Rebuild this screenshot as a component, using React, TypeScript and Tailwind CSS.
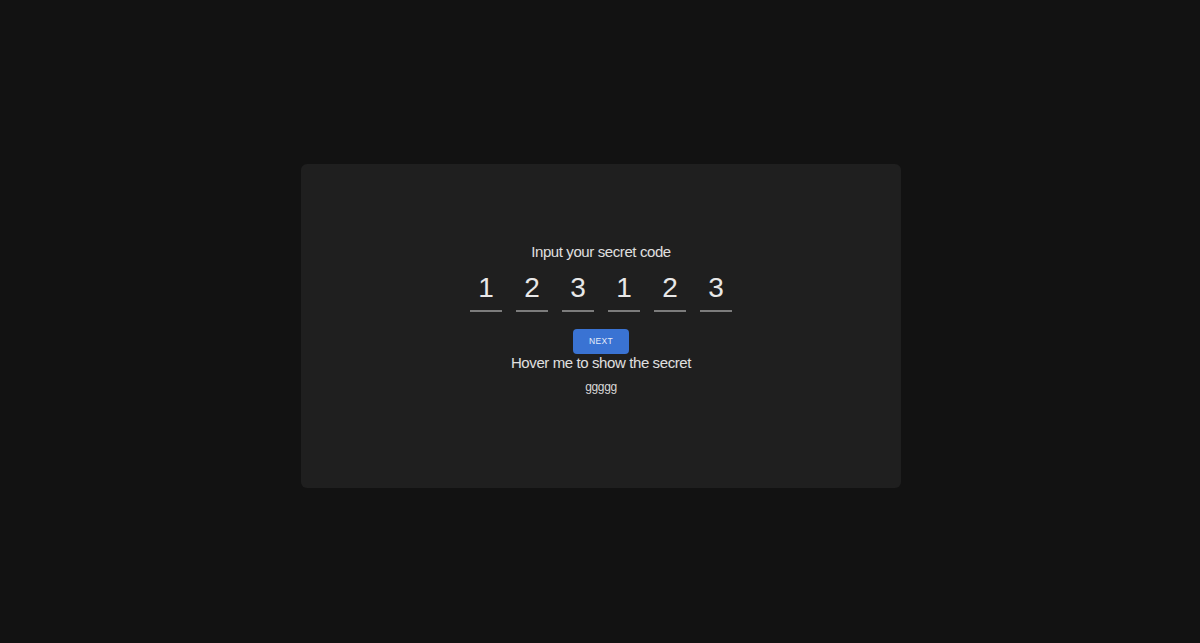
import { useState } from 'react';

const digits = ['1', '2', '3', '1', '2', '3'];

export default function App() {
  const [code, setCode] = useState(digits);

  return (
    <div className="min-h-screen w-full bg-[#121212] flex items-center justify-center pt-[9px] pl-[2px] font-['Liberation_Sans',Arial,sans-serif]">
      <div className="w-[600px] h-[324px] rounded-md bg-[#1f1f1f] flex flex-col items-center justify-center pb-[15px]">
        <div className="text-[15px] leading-[18px] tracking-[-0.4px] text-[#e0e0e0]">Input your secret code</div>
        <div className="flex gap-[14px] mt-[11px]">
          {code.map((d, i) => (
            <input
              key={i}
              value={d}
              maxLength={1}
              onChange={(e) => {
                const next = [...code];
                next[i] = e.target.value;
                setCode(next);
              }}
              className="w-[32px] h-[40px] pb-[6px] bg-transparent text-center text-[28px] leading-[32px] text-[#e8e8e8] border-b-[2px] border-[#7c7c7c] outline-none"
            />
          ))}
        </div>
        <button className="mt-[17px] w-[56px] h-[25px] rounded-[4px] bg-[#3a73d3] text-[8.5px] tracking-[0.3px] text-[#e6edf9]">NEXT</button>
        <div className="text-[15px] leading-[18px] tracking-[-0.4px] text-[#e0e0e0]">Hover me to show the secret</div>
        <div className="mt-[8px] text-[12px] leading-[14px] tracking-[-0.4px] text-[#d8d8d8]">ggggg</div>
      </div>
    </div>
  );
}
